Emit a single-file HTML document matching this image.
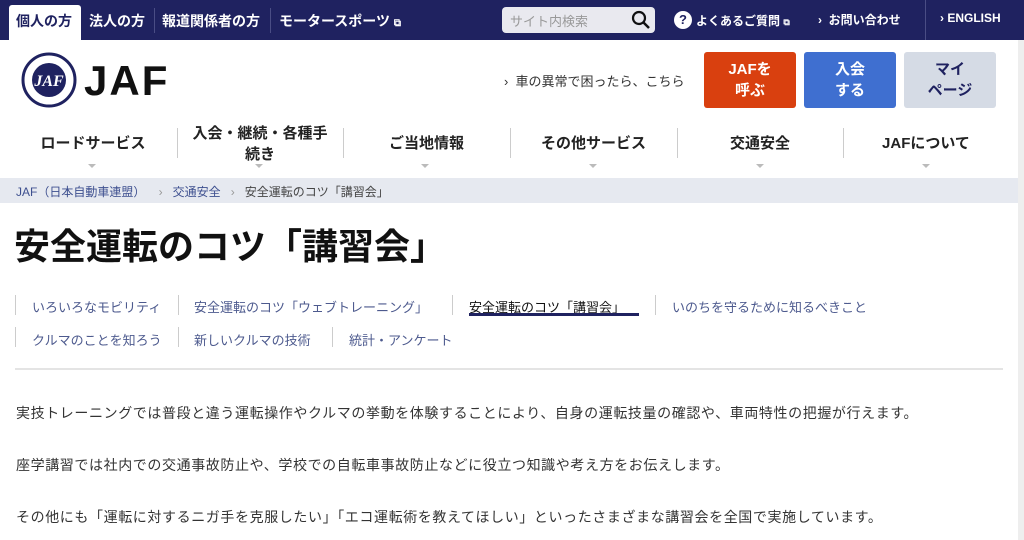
<!DOCTYPE html>
<html><head><meta charset="utf-8"><style>
*{margin:0;padding:0;box-sizing:border-box}
body{width:1024px;height:540px;overflow:hidden;background:#fff;font-family:"Liberation Sans","Noto Sans CJK JP",sans-serif;color:#222;position:relative}
.a{position:absolute;white-space:nowrap}
.top{position:absolute;left:0;top:0;width:1024px;height:40px;background:#1f2260}
.tw{color:#fff;font-size:14px;font-weight:bold}
.nav{font-size:15px;font-weight:bold;color:#222;text-align:center}
.sep{position:absolute;width:1px;background:#ccc}
.car{position:absolute;top:164px;width:0;height:0;border-left:4px solid transparent;border-right:4px solid transparent;border-top:4px solid #bbb}
.btn{position:absolute;top:52px;width:92px;height:56px;border-radius:3px;color:#fff;font-weight:bold;font-size:15px;text-align:center;line-height:21px;padding-top:7px}
.sub{font-size:13px;color:#4d5a8e}
.p{font-size:14px;color:#333;letter-spacing:0.6px}
</style></head><body>
<div class="top"></div>
<div class="a" style="left:9px;top:5px;width:72px;height:35px;background:#fff;border-radius:3px 3px 0 0"></div>
<div class="a" style="left:16px;top:11px;font-size:14px;font-weight:bold;color:#1f2260">個人の方</div>
<div class="a tw" style="left:89px;top:11px">法人の方</div>
<div class="a" style="left:154px;top:8px;width:1px;height:25px;background:#4a4d85"></div>
<div class="a tw" style="left:162px;top:11px">報道関係者の方</div>
<div class="a" style="left:270px;top:8px;width:1px;height:25px;background:#4a4d85"></div>
<div class="a tw" style="left:279px;top:11px">モータースポーツ <span style="font-size:10px">⧉</span></div>
<div class="a" style="left:502px;top:7px;width:153px;height:26px;background:#e9e9ef;border-radius:4px"></div>
<div class="a" style="left:510px;top:11px;font-size:13px;color:#999">サイト内検索</div>
<svg class="a" style="left:631px;top:10px" width="20" height="20"><circle cx="8" cy="8" r="6" fill="none" stroke="#111" stroke-width="2.2"/><line x1="12.5" y1="12.5" x2="18" y2="18" stroke="#111" stroke-width="2.5"/></svg>
<div class="a" style="left:674px;top:11px;width:18px;height:18px;border-radius:50%;background:#fff;color:#1f2260;font-size:13px;font-weight:bold;text-align:center;line-height:18px">?</div>
<div class="a tw" style="left:696px;top:12px;font-size:12px">よくあるご質問 <span style="font-size:9px">⧉</span></div>
<div class="a tw" style="left:818px;top:11px;font-size:12px">›&nbsp; お問い合わせ</div>
<div class="a" style="left:925px;top:0;width:1px;height:40px;background:#4a4d85"></div>
<div class="a tw" style="left:940px;top:11px;font-size:12px">›&nbsp;ENGLISH</div>
<div class="a" style="left:1018px;top:40px;width:6px;height:500px;background:#eee"></div>
<svg class="a" style="left:21px;top:52px" width="56" height="56"><circle cx="28" cy="28" r="26" fill="#fff" stroke="#1f2260" stroke-width="3"/><circle cx="28" cy="28" r="17" fill="#1f2260"/><text x="28" y="34" font-size="16" font-weight="bold" fill="#fff" text-anchor="middle" font-family="Liberation Serif" font-style="italic">JAF</text></svg>
<div class="a" style="left:84px;top:56px;font-size:42px;font-weight:bold;color:#111;letter-spacing:2px;line-height:50px">JAF</div>
<div class="a" style="left:504px;top:71px;font-size:13px;color:#333">›&nbsp; 車の異常で困ったら、こちら</div>
<div class="btn" style="left:704px;background:#d9400f">JAFを<br>呼ぶ</div>
<div class="btn" style="left:804px;background:#3f6fd0">入会<br>する</div>
<div class="btn" style="left:904px;background:#d5dbe5;color:#1f2260">マイ<br>ページ</div>
<div class="a nav" style="left:10px;top:132px;width:166px">ロードサービス</div>
<div class="a nav" style="left:177px;top:123px;width:166px;line-height:21px;white-space:normal">入会・継続・各種手<br>続き</div>
<div class="a nav" style="left:343px;top:132px;width:167px">ご当地情報</div>
<div class="a nav" style="left:510px;top:132px;width:167px">その他サービス</div>
<div class="a nav" style="left:677px;top:132px;width:166px">交通安全</div>
<div class="a nav" style="left:843px;top:132px;width:166px">JAFについて</div>
<div class="sep" style="left:177px;top:128px;height:30px"></div>
<div class="sep" style="left:343px;top:128px;height:30px"></div>
<div class="sep" style="left:510px;top:128px;height:30px"></div>
<div class="sep" style="left:677px;top:128px;height:30px"></div>
<div class="sep" style="left:843px;top:128px;height:30px"></div>
<div class="car" style="left:88px"></div><div class="car" style="left:255px"></div><div class="car" style="left:421px"></div><div class="car" style="left:589px"></div><div class="car" style="left:756px"></div><div class="car" style="left:922px"></div>
<div class="a" style="left:0;top:178px;width:1018px;height:25px;background:#e6e9f0"></div>
<div class="a" style="left:16px;top:183px;font-size:12px;color:#3d4f8f">JAF（日本自動車連盟）&nbsp;&nbsp;&nbsp; <span style="color:#999">›</span>&nbsp;&nbsp; 交通安全 &nbsp;&nbsp;<span style="color:#999">›</span>&nbsp;&nbsp; <span style="color:#444">安全運転のコツ「講習会」</span></div>
<div class="a" style="left:14px;top:224px;font-size:36px;font-weight:bold;color:#111;line-height:46px">安全運転のコツ「講習会」</div>
<div class="sep" style="left:15px;top:295px;height:20px"></div>
<div class="a sub" style="left:32px;top:297px">いろいろなモビリティ</div>
<div class="sep" style="left:178px;top:295px;height:20px"></div>
<div class="a sub" style="left:194px;top:297px">安全運転のコツ「ウェブトレーニング」</div>
<div class="sep" style="left:452px;top:295px;height:20px"></div>
<div class="a" style="left:469px;top:297px;font-size:13px;color:#111">安全運転のコツ「講習会」</div>
<div class="a" style="left:469px;top:313px;width:170px;height:3px;background:#1f2260"></div>
<div class="sep" style="left:655px;top:295px;height:20px"></div>
<div class="a sub" style="left:672px;top:297px">いのちを守るために知るべきこと</div>
<div class="sep" style="left:15px;top:327px;height:20px"></div>
<div class="a sub" style="left:32px;top:330px">クルマのことを知ろう</div>
<div class="sep" style="left:178px;top:327px;height:20px"></div>
<div class="a sub" style="left:194px;top:330px">新しいクルマの技術</div>
<div class="sep" style="left:332px;top:327px;height:20px"></div>
<div class="a sub" style="left:349px;top:330px">統計・アンケート</div>
<div class="a" style="left:15px;top:368px;width:988px;height:2px;background:#e4e4e4"></div>
<div class="a p" style="left:16px;top:403px">実技トレーニングでは普段と違う運転操作やクルマの挙動を体験することにより、自身の運転技量の確認や、車両特性の把握が行えます。</div>
<div class="a p" style="left:16px;top:455px">座学講習では社内での交通事故防止や、学校での自転車事故防止などに役立つ知識や考え方をお伝えします。</div>
<div class="a p" style="left:16px;top:507px">その他にも「運転に対するニガ手を克服したい」「エコ運転術を教えてほしい」といったさまざまな講習会を全国で実施しています。</div>
</body></html>
